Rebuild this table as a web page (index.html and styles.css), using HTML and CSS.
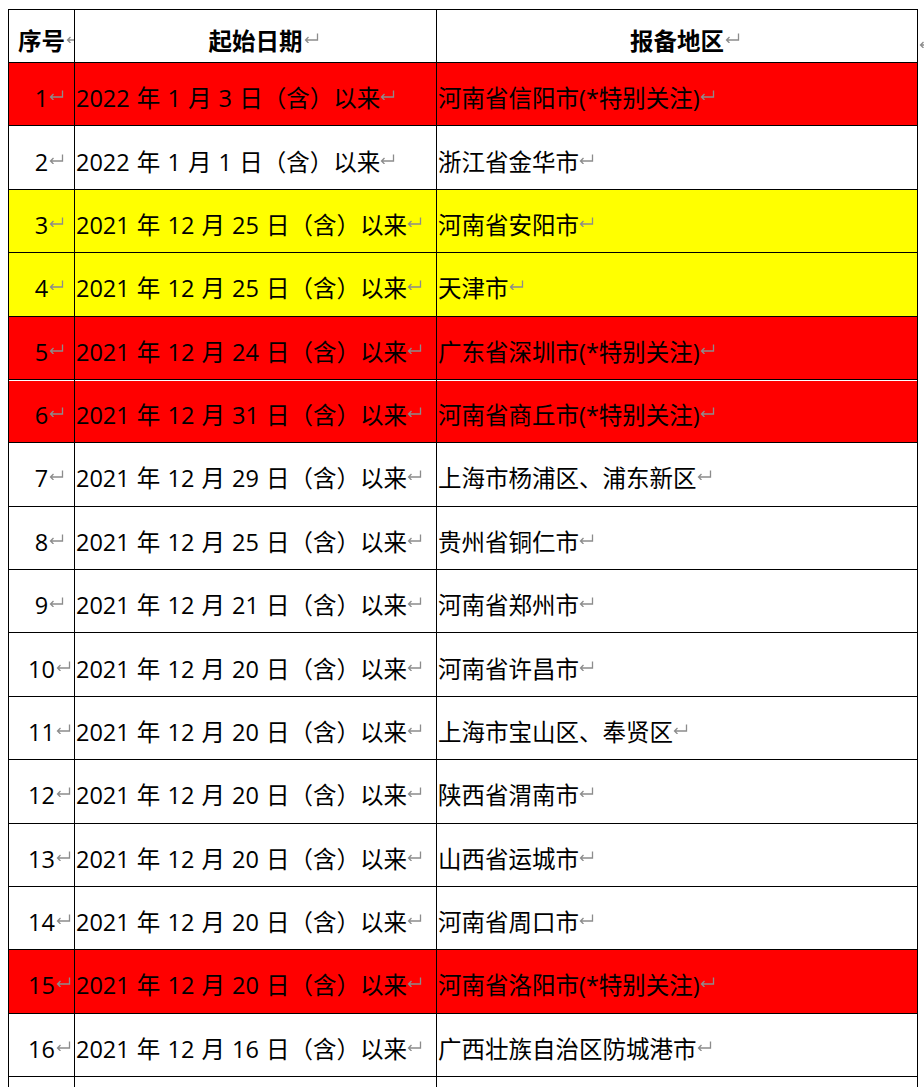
FILE: index.html
```html
<!DOCTYPE html>
<html lang="zh-CN">
<head>
<meta charset="utf-8">
<title>报备地区</title>
<link rel="stylesheet" href="styles.css">
</head>
<body>
<div class="page">
<table class="grid">
  <colgroup>
    <col class="c-no">
    <col class="c-date">
    <col class="c-area">
  </colgroup>
  <thead>
    <tr class="head">
      <th class="no"><span class="txt">序号<span class="mk"><svg viewBox="0 0 15 10" width="15" height="10"><path d="M13.5 0.5V7H1.5M4.5 4L1.5 7L4.5 10"/></svg></span></span></th>
      <th class="mid">起始日期<span class="mk"><svg viewBox="0 0 15 10" width="15" height="10"><path d="M13.5 0.5V7H1.5M4.5 4L1.5 7L4.5 10"/></svg></span></th>
      <th class="mid">报备地区<span class="mk"><svg viewBox="0 0 15 10" width="15" height="10"><path d="M13.5 0.5V7H1.5M4.5 4L1.5 7L4.5 10"/></svg></span></th>
    </tr>
  </thead>
  <tbody>
    <tr class="red"><td class="no">1<span class="mk"><svg viewBox="0 0 15 10" width="15" height="10"><path d="M13.5 0.5V7H1.5M4.5 4L1.5 7L4.5 10"/></svg></span></td><td class="date">2022 年 1 月 3 日（含）以来<span class="ret"><svg viewBox="0 0 15 10" width="15" height="10"><path d="M13.5 0.5V7H1.5M4.5 4L1.5 7L4.5 10"/></svg></span></td><td>河南省信阳市(*特别关注)<span class="ret"><svg viewBox="0 0 15 10" width="15" height="10"><path d="M13.5 0.5V7H1.5M4.5 4L1.5 7L4.5 10"/></svg></span></td></tr>
    <tr><td class="no">2<span class="mk"><svg viewBox="0 0 15 10" width="15" height="10"><path d="M13.5 0.5V7H1.5M4.5 4L1.5 7L4.5 10"/></svg></span></td><td class="date">2022 年 1 月 1 日（含）以来<span class="ret"><svg viewBox="0 0 15 10" width="15" height="10"><path d="M13.5 0.5V7H1.5M4.5 4L1.5 7L4.5 10"/></svg></span></td><td>浙江省金华市<span class="ret"><svg viewBox="0 0 15 10" width="15" height="10"><path d="M13.5 0.5V7H1.5M4.5 4L1.5 7L4.5 10"/></svg></span></td></tr>
    <tr class="yellow"><td class="no">3<span class="mk"><svg viewBox="0 0 15 10" width="15" height="10"><path d="M13.5 0.5V7H1.5M4.5 4L1.5 7L4.5 10"/></svg></span></td><td class="date">2021 年 12 月 25 日（含）以来<span class="ret"><svg viewBox="0 0 15 10" width="15" height="10"><path d="M13.5 0.5V7H1.5M4.5 4L1.5 7L4.5 10"/></svg></span></td><td>河南省安阳市<span class="ret"><svg viewBox="0 0 15 10" width="15" height="10"><path d="M13.5 0.5V7H1.5M4.5 4L1.5 7L4.5 10"/></svg></span></td></tr>
    <tr class="yellow"><td class="no">4<span class="mk"><svg viewBox="0 0 15 10" width="15" height="10"><path d="M13.5 0.5V7H1.5M4.5 4L1.5 7L4.5 10"/></svg></span></td><td class="date">2021 年 12 月 25 日（含）以来<span class="ret"><svg viewBox="0 0 15 10" width="15" height="10"><path d="M13.5 0.5V7H1.5M4.5 4L1.5 7L4.5 10"/></svg></span></td><td>天津市<span class="ret"><svg viewBox="0 0 15 10" width="15" height="10"><path d="M13.5 0.5V7H1.5M4.5 4L1.5 7L4.5 10"/></svg></span></td></tr>
    <tr class="red"><td class="no">5<span class="mk"><svg viewBox="0 0 15 10" width="15" height="10"><path d="M13.5 0.5V7H1.5M4.5 4L1.5 7L4.5 10"/></svg></span></td><td class="date">2021 年 12 月 24 日（含）以来<span class="ret"><svg viewBox="0 0 15 10" width="15" height="10"><path d="M13.5 0.5V7H1.5M4.5 4L1.5 7L4.5 10"/></svg></span></td><td>广东省深圳市(*特别关注)<span class="ret"><svg viewBox="0 0 15 10" width="15" height="10"><path d="M13.5 0.5V7H1.5M4.5 4L1.5 7L4.5 10"/></svg></span></td></tr>
    <tr class="red gap"><td class="no">6<span class="mk"><svg viewBox="0 0 15 10" width="15" height="10"><path d="M13.5 0.5V7H1.5M4.5 4L1.5 7L4.5 10"/></svg></span></td><td class="date">2021 年 12 月 31 日（含）以来<span class="ret"><svg viewBox="0 0 15 10" width="15" height="10"><path d="M13.5 0.5V7H1.5M4.5 4L1.5 7L4.5 10"/></svg></span></td><td>河南省商丘市(*特别关注)<span class="ret"><svg viewBox="0 0 15 10" width="15" height="10"><path d="M13.5 0.5V7H1.5M4.5 4L1.5 7L4.5 10"/></svg></span></td></tr>
    <tr><td class="no">7<span class="mk"><svg viewBox="0 0 15 10" width="15" height="10"><path d="M13.5 0.5V7H1.5M4.5 4L1.5 7L4.5 10"/></svg></span></td><td class="date">2021 年 12 月 29 日（含）以来<span class="ret"><svg viewBox="0 0 15 10" width="15" height="10"><path d="M13.5 0.5V7H1.5M4.5 4L1.5 7L4.5 10"/></svg></span></td><td>上海市杨浦区、浦东新区<span class="ret"><svg viewBox="0 0 15 10" width="15" height="10"><path d="M13.5 0.5V7H1.5M4.5 4L1.5 7L4.5 10"/></svg></span></td></tr>
    <tr><td class="no">8<span class="mk"><svg viewBox="0 0 15 10" width="15" height="10"><path d="M13.5 0.5V7H1.5M4.5 4L1.5 7L4.5 10"/></svg></span></td><td class="date">2021 年 12 月 25 日（含）以来<span class="ret"><svg viewBox="0 0 15 10" width="15" height="10"><path d="M13.5 0.5V7H1.5M4.5 4L1.5 7L4.5 10"/></svg></span></td><td>贵州省铜仁市<span class="ret"><svg viewBox="0 0 15 10" width="15" height="10"><path d="M13.5 0.5V7H1.5M4.5 4L1.5 7L4.5 10"/></svg></span></td></tr>
    <tr><td class="no">9<span class="mk"><svg viewBox="0 0 15 10" width="15" height="10"><path d="M13.5 0.5V7H1.5M4.5 4L1.5 7L4.5 10"/></svg></span></td><td class="date">2021 年 12 月 21 日（含）以来<span class="ret"><svg viewBox="0 0 15 10" width="15" height="10"><path d="M13.5 0.5V7H1.5M4.5 4L1.5 7L4.5 10"/></svg></span></td><td>河南省郑州市<span class="ret"><svg viewBox="0 0 15 10" width="15" height="10"><path d="M13.5 0.5V7H1.5M4.5 4L1.5 7L4.5 10"/></svg></span></td></tr>
    <tr><td class="no">10<span class="mk"><svg viewBox="0 0 15 10" width="15" height="10"><path d="M13.5 0.5V7H1.5M4.5 4L1.5 7L4.5 10"/></svg></span></td><td class="date">2021 年 12 月 20 日（含）以来<span class="ret"><svg viewBox="0 0 15 10" width="15" height="10"><path d="M13.5 0.5V7H1.5M4.5 4L1.5 7L4.5 10"/></svg></span></td><td>河南省许昌市<span class="ret"><svg viewBox="0 0 15 10" width="15" height="10"><path d="M13.5 0.5V7H1.5M4.5 4L1.5 7L4.5 10"/></svg></span></td></tr>
    <tr><td class="no">11<span class="mk"><svg viewBox="0 0 15 10" width="15" height="10"><path d="M13.5 0.5V7H1.5M4.5 4L1.5 7L4.5 10"/></svg></span></td><td class="date">2021 年 12 月 20 日（含）以来<span class="ret"><svg viewBox="0 0 15 10" width="15" height="10"><path d="M13.5 0.5V7H1.5M4.5 4L1.5 7L4.5 10"/></svg></span></td><td>上海市宝山区、奉贤区<span class="ret"><svg viewBox="0 0 15 10" width="15" height="10"><path d="M13.5 0.5V7H1.5M4.5 4L1.5 7L4.5 10"/></svg></span></td></tr>
    <tr><td class="no">12<span class="mk"><svg viewBox="0 0 15 10" width="15" height="10"><path d="M13.5 0.5V7H1.5M4.5 4L1.5 7L4.5 10"/></svg></span></td><td class="date">2021 年 12 月 20 日（含）以来<span class="ret"><svg viewBox="0 0 15 10" width="15" height="10"><path d="M13.5 0.5V7H1.5M4.5 4L1.5 7L4.5 10"/></svg></span></td><td>陕西省渭南市<span class="ret"><svg viewBox="0 0 15 10" width="15" height="10"><path d="M13.5 0.5V7H1.5M4.5 4L1.5 7L4.5 10"/></svg></span></td></tr>
    <tr><td class="no">13<span class="mk"><svg viewBox="0 0 15 10" width="15" height="10"><path d="M13.5 0.5V7H1.5M4.5 4L1.5 7L4.5 10"/></svg></span></td><td class="date">2021 年 12 月 20 日（含）以来<span class="ret"><svg viewBox="0 0 15 10" width="15" height="10"><path d="M13.5 0.5V7H1.5M4.5 4L1.5 7L4.5 10"/></svg></span></td><td>山西省运城市<span class="ret"><svg viewBox="0 0 15 10" width="15" height="10"><path d="M13.5 0.5V7H1.5M4.5 4L1.5 7L4.5 10"/></svg></span></td></tr>
    <tr><td class="no">14<span class="mk"><svg viewBox="0 0 15 10" width="15" height="10"><path d="M13.5 0.5V7H1.5M4.5 4L1.5 7L4.5 10"/></svg></span></td><td class="date">2021 年 12 月 20 日（含）以来<span class="ret"><svg viewBox="0 0 15 10" width="15" height="10"><path d="M13.5 0.5V7H1.5M4.5 4L1.5 7L4.5 10"/></svg></span></td><td>河南省周口市<span class="ret"><svg viewBox="0 0 15 10" width="15" height="10"><path d="M13.5 0.5V7H1.5M4.5 4L1.5 7L4.5 10"/></svg></span></td></tr>
    <tr class="red"><td class="no">15<span class="mk"><svg viewBox="0 0 15 10" width="15" height="10"><path d="M13.5 0.5V7H1.5M4.5 4L1.5 7L4.5 10"/></svg></span></td><td class="date">2021 年 12 月 20 日（含）以来<span class="ret"><svg viewBox="0 0 15 10" width="15" height="10"><path d="M13.5 0.5V7H1.5M4.5 4L1.5 7L4.5 10"/></svg></span></td><td>河南省洛阳市(*特别关注)<span class="ret"><svg viewBox="0 0 15 10" width="15" height="10"><path d="M13.5 0.5V7H1.5M4.5 4L1.5 7L4.5 10"/></svg></span></td></tr>
    <tr><td class="no">16<span class="mk"><svg viewBox="0 0 15 10" width="15" height="10"><path d="M13.5 0.5V7H1.5M4.5 4L1.5 7L4.5 10"/></svg></span></td><td class="date">2021 年 12 月 16 日（含）以来<span class="ret"><svg viewBox="0 0 15 10" width="15" height="10"><path d="M13.5 0.5V7H1.5M4.5 4L1.5 7L4.5 10"/></svg></span></td><td>广西壮族自治区防城港市<span class="ret"><svg viewBox="0 0 15 10" width="15" height="10"><path d="M13.5 0.5V7H1.5M4.5 4L1.5 7L4.5 10"/></svg></span></td></tr>
    <tr><td class="no"></td><td></td><td></td></tr>
  </tbody>
</table>
<span class="rowend"><svg viewBox="0 0 15 10" width="15" height="10"><path d="M13.5 0.5V7H1.5M4.5 4L1.5 7L4.5 10"/></svg></span>
</div>
</body>
</html>
```

FILE: styles.css
```css
html {
  overflow: hidden;
  background: #fff;
}

body {
  margin: 9px 0 0 8px;
  font-family: "Open Sans", "Noto Sans CJK SC", sans-serif;
  font-size: 23.5px;
  color: #000;
}

.page {
  display: flex;
  align-items: flex-start;
}

.grid {
  flex-shrink: 0;
  width: 909px;
  table-layout: fixed;
  border-collapse: collapse;
}

.c-no { width: 66px; }
.c-date { width: 362px; }
.c-area { width: 481px; }

.grid th,
.grid td {
  border: 1px solid #000;
  padding: 8px 0 0 1px;
  line-height: 30px;
  white-space: nowrap;
  overflow: hidden;
  vertical-align: middle;
  text-align: left;
}

.grid .date {
  word-spacing: 1px;
}

.grid .head {
  height: 53px;
}

.grid tbody tr {
  height: 63.375px;
}

.grid th {
  font-weight: 700;
  font-family: "Noto Sans CJK SC", sans-serif;
}

.grid th.mid,
.grid .no {
  text-align: center;
  padding-left: 0;
}

.red td { background: #ff0000; }
.yellow td { background: #ffff00; }

.gap td {
  box-shadow: inset 0 1px 0 #fff;
}

.mk {
  display: inline-block;
  width: 0;
  overflow: visible;
  vertical-align: 7px;
  line-height: 0;
}

.ret {
  display: inline-block;
  vertical-align: 7px;
  line-height: 0;
}

.mk svg,
.ret svg,
.rowend svg {
  display: block;
  fill: none;
  stroke: #8c8c8c;
  stroke-width: 1.3;
}

.mk svg {
  margin-left: 1px;
}

.rowend {
  flex-shrink: 0;
  margin: 29px 0 0 1px;
}
```
